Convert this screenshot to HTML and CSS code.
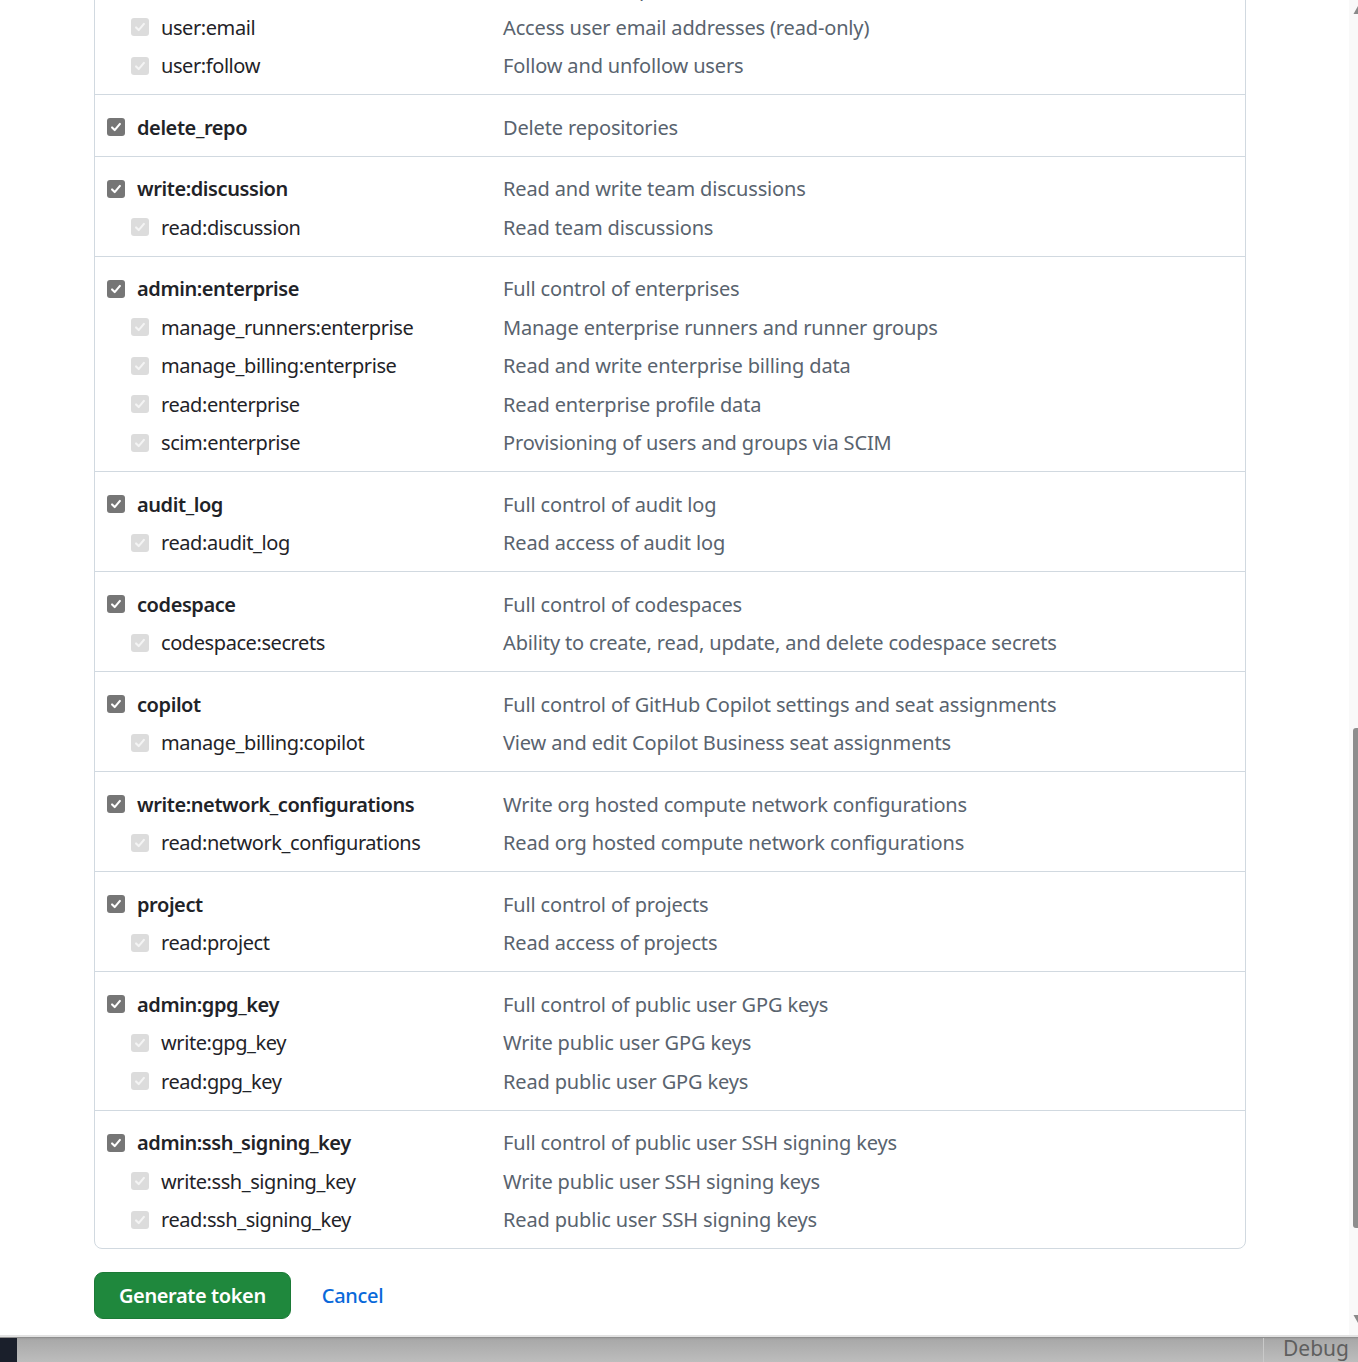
FILE: index.html
```html
<!DOCTYPE html>
<html lang="en">
<head>
<meta charset="utf-8">
<title>New personal access token (classic)</title>
<link rel="stylesheet" href="styles.css">
</head>
<body>
<div class="window">
  <div class="viewport">
    <main class="page">
      <div class="scopes">
        <div class="group">
          <div class="row"><label class="name top"><span class="cb on"><svg viewBox="0 0 16 16"><path d="M3.5 8.5l3 3 6-7"/></svg></span>user</label><span class="desc">Update ALL user data</span></div>
          <div class="row"><label class="name sub"><span class="cb off"><svg viewBox="0 0 16 16"><path d="M3.5 8.5l3 3 6-7"/></svg></span>read:user</label><span class="desc">Read ALL user profile data</span></div>
          <div class="row"><label class="name sub"><span class="cb off"><svg viewBox="0 0 16 16"><path d="M3.5 8.5l3 3 6-7"/></svg></span>user:email</label><span class="desc">Access user email addresses (read-only)</span></div>
          <div class="row"><label class="name sub"><span class="cb off"><svg viewBox="0 0 16 16"><path d="M3.5 8.5l3 3 6-7"/></svg></span>user:follow</label><span class="desc">Follow and unfollow users</span></div>
        </div>
        <div class="group">
          <div class="row"><label class="name top"><span class="cb on"><svg viewBox="0 0 16 16"><path d="M3.5 8.5l3 3 6-7"/></svg></span>delete_repo</label><span class="desc">Delete repositories</span></div>
        </div>
        <div class="group">
          <div class="row"><label class="name top"><span class="cb on"><svg viewBox="0 0 16 16"><path d="M3.5 8.5l3 3 6-7"/></svg></span>write:discussion</label><span class="desc">Read and write team discussions</span></div>
          <div class="row"><label class="name sub"><span class="cb off"><svg viewBox="0 0 16 16"><path d="M3.5 8.5l3 3 6-7"/></svg></span>read:discussion</label><span class="desc">Read team discussions</span></div>
        </div>
        <div class="group">
          <div class="row"><label class="name top"><span class="cb on"><svg viewBox="0 0 16 16"><path d="M3.5 8.5l3 3 6-7"/></svg></span>admin:enterprise</label><span class="desc">Full control of enterprises</span></div>
          <div class="row"><label class="name sub"><span class="cb off"><svg viewBox="0 0 16 16"><path d="M3.5 8.5l3 3 6-7"/></svg></span>manage_runners:enterprise</label><span class="desc">Manage enterprise runners and runner groups</span></div>
          <div class="row"><label class="name sub"><span class="cb off"><svg viewBox="0 0 16 16"><path d="M3.5 8.5l3 3 6-7"/></svg></span>manage_billing:enterprise</label><span class="desc">Read and write enterprise billing data</span></div>
          <div class="row"><label class="name sub"><span class="cb off"><svg viewBox="0 0 16 16"><path d="M3.5 8.5l3 3 6-7"/></svg></span>read:enterprise</label><span class="desc">Read enterprise profile data</span></div>
          <div class="row"><label class="name sub"><span class="cb off"><svg viewBox="0 0 16 16"><path d="M3.5 8.5l3 3 6-7"/></svg></span>scim:enterprise</label><span class="desc">Provisioning of users and groups via SCIM</span></div>
        </div>
        <div class="group">
          <div class="row"><label class="name top"><span class="cb on"><svg viewBox="0 0 16 16"><path d="M3.5 8.5l3 3 6-7"/></svg></span>audit_log</label><span class="desc">Full control of audit log</span></div>
          <div class="row"><label class="name sub"><span class="cb off"><svg viewBox="0 0 16 16"><path d="M3.5 8.5l3 3 6-7"/></svg></span>read:audit_log</label><span class="desc">Read access of audit log</span></div>
        </div>
        <div class="group">
          <div class="row"><label class="name top"><span class="cb on"><svg viewBox="0 0 16 16"><path d="M3.5 8.5l3 3 6-7"/></svg></span>codespace</label><span class="desc">Full control of codespaces</span></div>
          <div class="row"><label class="name sub"><span class="cb off"><svg viewBox="0 0 16 16"><path d="M3.5 8.5l3 3 6-7"/></svg></span>codespace:secrets</label><span class="desc">Ability to create, read, update, and delete codespace secrets</span></div>
        </div>
        <div class="group">
          <div class="row"><label class="name top"><span class="cb on"><svg viewBox="0 0 16 16"><path d="M3.5 8.5l3 3 6-7"/></svg></span>copilot</label><span class="desc">Full control of GitHub Copilot settings and seat assignments</span></div>
          <div class="row"><label class="name sub"><span class="cb off"><svg viewBox="0 0 16 16"><path d="M3.5 8.5l3 3 6-7"/></svg></span>manage_billing:copilot</label><span class="desc">View and edit Copilot Business seat assignments</span></div>
        </div>
        <div class="group">
          <div class="row"><label class="name top"><span class="cb on"><svg viewBox="0 0 16 16"><path d="M3.5 8.5l3 3 6-7"/></svg></span>write:network_configurations</label><span class="desc">Write org hosted compute network configurations</span></div>
          <div class="row"><label class="name sub"><span class="cb off"><svg viewBox="0 0 16 16"><path d="M3.5 8.5l3 3 6-7"/></svg></span>read:network_configurations</label><span class="desc">Read org hosted compute network configurations</span></div>
        </div>
        <div class="group">
          <div class="row"><label class="name top"><span class="cb on"><svg viewBox="0 0 16 16"><path d="M3.5 8.5l3 3 6-7"/></svg></span>project</label><span class="desc">Full control of projects</span></div>
          <div class="row"><label class="name sub"><span class="cb off"><svg viewBox="0 0 16 16"><path d="M3.5 8.5l3 3 6-7"/></svg></span>read:project</label><span class="desc">Read access of projects</span></div>
        </div>
        <div class="group">
          <div class="row"><label class="name top"><span class="cb on"><svg viewBox="0 0 16 16"><path d="M3.5 8.5l3 3 6-7"/></svg></span>admin:gpg_key</label><span class="desc">Full control of public user GPG keys</span></div>
          <div class="row"><label class="name sub"><span class="cb off"><svg viewBox="0 0 16 16"><path d="M3.5 8.5l3 3 6-7"/></svg></span>write:gpg_key</label><span class="desc">Write public user GPG keys</span></div>
          <div class="row"><label class="name sub"><span class="cb off"><svg viewBox="0 0 16 16"><path d="M3.5 8.5l3 3 6-7"/></svg></span>read:gpg_key</label><span class="desc">Read public user GPG keys</span></div>
        </div>
        <div class="group">
          <div class="row"><label class="name top"><span class="cb on"><svg viewBox="0 0 16 16"><path d="M3.5 8.5l3 3 6-7"/></svg></span>admin:ssh_signing_key</label><span class="desc">Full control of public user SSH signing keys</span></div>
          <div class="row"><label class="name sub"><span class="cb off"><svg viewBox="0 0 16 16"><path d="M3.5 8.5l3 3 6-7"/></svg></span>write:ssh_signing_key</label><span class="desc">Write public user SSH signing keys</span></div>
          <div class="row"><label class="name sub"><span class="cb off"><svg viewBox="0 0 16 16"><path d="M3.5 8.5l3 3 6-7"/></svg></span>read:ssh_signing_key</label><span class="desc">Read public user SSH signing keys</span></div>
        </div>
      </div>
      <div class="actions">
        <button class="btn-primary" type="button">Generate token</button>
        <a class="cancel" href="#">Cancel</a>
      </div>
    </main>
    <div class="scrollbar">
      <svg class="arrow" viewBox="0 0 10 10"><path d="M5 1 L9.5 9 L0.5 9 Z"/></svg>
      <div class="thumb"></div>
      <svg class="arrow down" viewBox="0 0 10 10"><path d="M0.5 1 L9.5 1 L5 9 Z"/></svg>
    </div>
  </div>
  <div class="taskbar">
    <div class="task-dark"></div>
    <div class="task-fill"></div>
    <div class="task-debug">Debug</div>
  </div>
</div>
</body>
</html>
```
FILE: styles.css
```css
* { box-sizing: border-box; }
html, body { margin: 0; padding: 0; }
body {
  font-family: "Noto Sans", "Open Sans", "Liberation Sans", sans-serif;
  color: #1f2328;
  background: #ffffff;
  overflow: hidden;
}
.window {
  height: 1362px;
  display: flex;
  flex-direction: column;
}
.viewport {
  height: 1337px;
  display: flex;
  overflow: hidden;
  border-bottom: 2px solid #e2e2e2;
}
.page {
  flex: 1;
  padding-left: 94px;
  overflow: hidden;
}
.scopes {
  width: 1152px;
  margin-top: -83px;
  border: 1px solid #d1d9e0;
  border-radius: 8px;
}
.group {
  padding: 11px 0;
}
.group + .group {
  border-top: 1px solid #d1d9e0;
}
.row {
  display: grid;
  grid-template-columns: 408px 1fr;
  height: 38.5px;
  padding-top: 4px;
  align-items: center;
  font-size: 20px;
}
.name {
  display: flex;
  align-items: center;
  gap: 12px;
  white-space: nowrap;
  letter-spacing: -0.42px;
}
.name.top {
  padding-left: 12px;
  font-weight: 600;
}
.name.sub {
  padding-left: 36px;
  font-weight: 400;
}
.desc {
  color: #59636e;
  white-space: nowrap;
  letter-spacing: -0.15px;
}
.cb {
  width: 18px;
  height: 18px;
  border-radius: 3px;
  display: inline-flex;
  align-items: center;
  justify-content: center;
  flex: none;
}
.cb svg {
  width: 14px;
  height: 14px;
  fill: none;
  stroke-width: 2.4;
  stroke-linecap: round;
  stroke-linejoin: round;
}
.cb.on { background: #767676; }
.cb.on svg { stroke: #ffffff; }
.cb.off { background: #dcdcdc; }
.cb.off svg { stroke: #f4f4f4; }
.actions {
  display: flex;
  align-items: center;
  margin-top: 23px;
  gap: 31px;
}
.btn-primary {
  height: 47px;
  padding: 0 24px;
  border: 1px solid #1c7a37;
  border-radius: 9px;
  background: #1f883d;
  color: #ffffff;
  font-family: inherit;
  font-size: 20px;
  font-weight: 600;
  letter-spacing: -0.4px;
}
.cancel {
  color: #0969da;
  font-size: 20px;
  font-weight: 500;
  letter-spacing: -0.3px;
  text-decoration: none;
}
.scrollbar {
  width: 9px;
  background: #f9f9f9;
  display: flex;
  flex-direction: column;
  align-items: flex-end;
  overflow: hidden;
}
.arrow {
  width: 10px;
  height: 10px;
  margin-top: 5px;
  margin-right: -5px;
  fill: #8a8a8a;
  flex: none;
}
.thumb {
  width: 5px;
  height: 500px;
  margin-top: 713px;
  background: #8e8e8e;
  border-radius: 3px 0 0 3px;
  flex: none;
}
.arrow.down {
  margin-top: 86px;
}
.taskbar {
  flex: 1;
  display: flex;
  background: linear-gradient(#9c9c9c, #a9a9a9 2px, #bdbdbd);
  border-top: 1px solid #8f8f8f;
  overflow: hidden;
}
.task-dark {
  width: 17px;
  background: #1a1f2b;
}
.task-fill {
  flex: 1;
}
.task-debug {
  width: 95px;
  border-left: 1px solid #c9c9c9;
  padding-left: 19px;
  font-size: 21px;
  line-height: 18px;
  padding-top: 1px;
  color: #5f5f5f;
  font-family: "Noto Sans", sans-serif;
}
```
